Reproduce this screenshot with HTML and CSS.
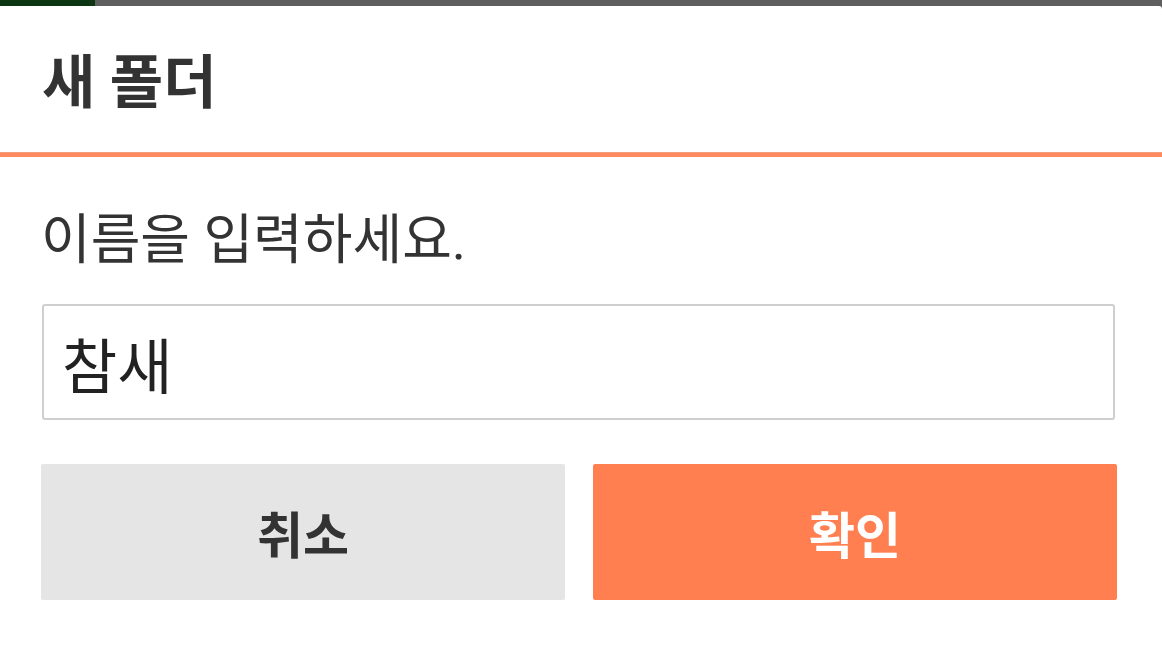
FILE: index.html
```html
<!DOCTYPE html>
<html lang="ko">
<head>
  <meta charset="UTF-8">
  <meta name="viewport" content="width=device-width, initial-scale=1.0">
  <title>새 폴더</title>
  <link rel="stylesheet" href="styles.css">
</head>
<body>
  <div class="statusbar">
    <span class="statusbar-app"></span>
  </div>
  <div class="dialog">
    <div class="dialog-header">
      <h1>새 폴더</h1>
    </div>
    <div class="divider"></div>
    <div class="dialog-body">
      <p class="message">이름을 입력하세요.</p>
      <input type="text" class="name-input" value="참새">
      <div class="actions">
        <button class="btn cancel">취소</button>
        <button class="btn confirm">확인</button>
      </div>
    </div>
  </div>
</body>
</html>
```

FILE: styles.css
```css
* {
  margin: 0;
  padding: 0;
  box-sizing: border-box;
}

body {
  background-color: #5f5f5f;
  font-family: Roboto, "Noto Sans CJK KR", sans-serif;
  color: #333;
  overflow: hidden;
}

input, button {
  appearance: none;
  border: none;
  outline: none;
  font-family: inherit;
}

.statusbar {
  height: 6px;
  display: flex;
}

.statusbar-app {
  width: 95px;
  background-color: #0c3511;
}

.dialog {
  height: 639px;
  background-color: #fff;
  border-top-right-radius: 3px;
}

.dialog-header {
  height: 146px;
  display: flex;
  align-items: center;
  padding-left: 42px;
  padding-top: 8px;
}

.dialog-header h1 {
  font-size: 58px;
  font-weight: bold;
  line-height: 64px;
}

.divider {
  height: 5px;
  background-color: #ff8a60;
  border-top: 1px solid #f59a7a;
}

.dialog-body {
  padding: 0 41px;
}

.message {
  margin-top: 52px;
  font-size: 54px;
  line-height: 64px;
}

.name-input {
  display: block;
  margin-top: 31px;
  margin-left: 1px;
  width: 1073px;
  height: 116px;
  padding: 0 18px;
  border: 2px solid #cfcfcf;
  border-radius: 3px;
  font-size: 60px;
  color: #222;
  background: #fff;
}

.actions {
  margin-top: 44px;
  display: grid;
  grid-template-columns: 524px 524px;
  column-gap: 28px;
}

.btn {
  height: 136px;
  border-radius: 2px;
  font-size: 50px;
  font-weight: bold;
  cursor: pointer;
}

.btn.cancel {
  background-color: #e5e5e5;
  color: #333;
}

.btn.confirm {
  background-color: #ff7f50;
  color: #fff;
}
```
